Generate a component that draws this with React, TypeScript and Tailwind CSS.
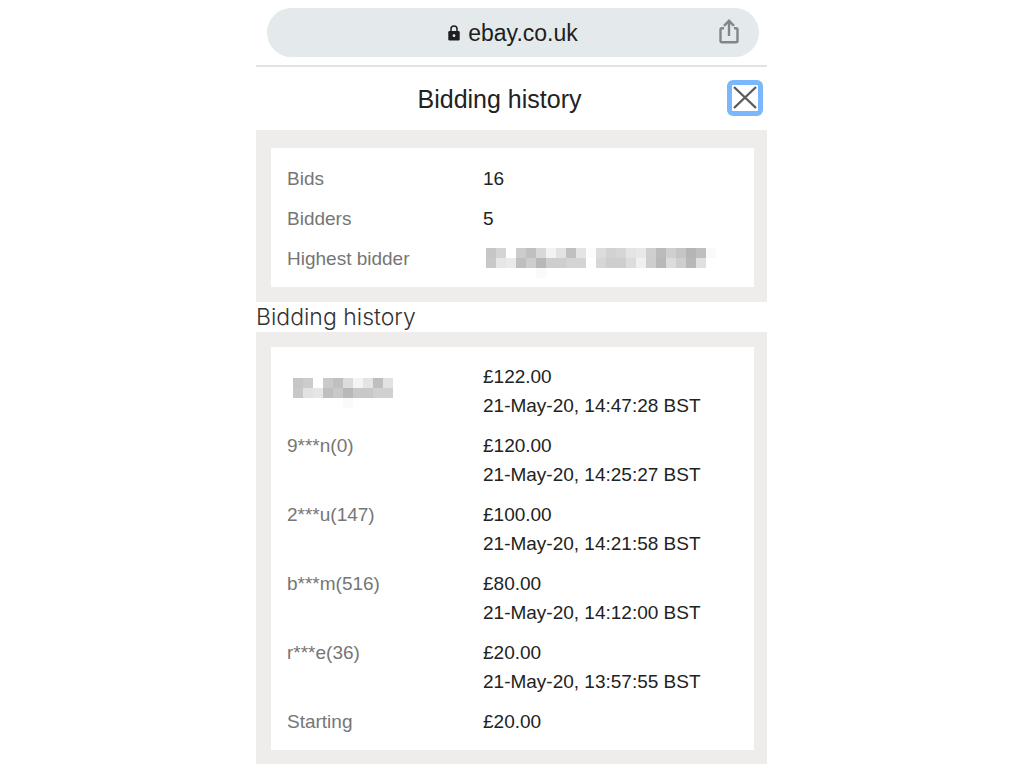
import React from "react";

type Entry = {
  bidder: string | null;
  amount: string;
  time?: string;
};

const entries: Entry[] = [
  { bidder: null, amount: "£122.00", time: "21-May-20, 14:47:28 BST" },
  { bidder: "9***n(0)", amount: "£120.00", time: "21-May-20, 14:25:27 BST" },
  { bidder: "2***u(147)", amount: "£100.00", time: "21-May-20, 14:21:58 BST" },
  { bidder: "b***m(516)", amount: "£80.00", time: "21-May-20, 14:12:00 BST" },
  { bidder: "r***e(36)", amount: "£20.00", time: "21-May-20, 13:57:55 BST" },
  { bidder: "Starting", amount: "£20.00" },
];

// Grey levels of the redaction mosaic, one two-digit hex value per 10px block.
const highestBidderBlocks = [
  "c6 d4 ff cc c0 d8 f2 e2 c0 e4 fc dc d2 d6 e4 e8 cf bb cf c5 b5 bf fa",
  "c8 e6 ea bf cd b8 cd ce d4 d4 ff d6 ce ce dc f0 ce b8 dc ce b8 e0 ff",
  "ff ff ff ff ff fa ff ff ff ff ff ff ff ff ff ff ff ff ff ff ff ff ff",
];

const topBidderBlocks = [
  "c6 cc ff ca c0 dc f4 e4 bf e2",
  "c8 e2 e6 bf c8 b8 c8 c8 d0 d0",
  "ff ff ff ff ff fa ff ff ff ff",
];

function Mosaic({ rows, label }: { rows: string[]; label: string }) {
  const cells = rows.map((row) => row.split(" "));
  const width = cells[0].length * 10;
  const height = cells.length * 10;
  return (
    <svg
      width={width}
      height={height}
      viewBox={`0 0 ${width} ${height}`}
      role="img"
      aria-label={label}
      shapeRendering="crispEdges"
      className="block"
    >
      {cells.map((row, y) =>
        row.map((level, x) => (
          <rect
            key={`${x}-${y}`}
            x={x * 10}
            y={y * 10}
            width={10}
            height={10}
            fill={`#${level}${level}${level}`}
          />
        )),
      )}
    </svg>
  );
}

function AddressBar() {
  return (
    <div className="border-b-2 border-[#e2e2e4] pt-2 pr-2 pb-2 pl-[11px]">
      <div className="grid h-[49px] grid-cols-[1fr_auto_1fr] items-center rounded-full bg-[#e4e9ec] px-5 text-[#1c1e20]">
        <span />
        <a
          href="https://ebay.co.uk"
          className="flex items-center gap-2 text-[23px] leading-7"
        >
          <svg width="12" height="16" viewBox="0 0 12 16" aria-hidden="true">
            <path d="M3 6.5V4a3 3 0 0 1 6 0v2.500" fill="none" stroke="currentColor" strokeWidth="1.500" />
            <rect x="0.300" y="6" width="11.400" height="9.500" rx="1.300" fill="currentColor" />
            <circle cx="6" cy="10.700" r="1.400" fill="#e4e9ec" />
          </svg>
          ebay.co.uk
        </a>
        <button type="button" aria-label="Share" className="justify-self-end pb-[2px] text-[#80868b]">
          <svg
            width="20"
            height="25"
            viewBox="0 0 20 25"
            fill="none"
            stroke="currentColor"
            strokeWidth="2.400"
            className="block"
          >
            <path d="M5 9.200H3A1.500 1.500 0 0 0 1.500 10.700V21.800a1.500 1.500 0 0 0 1.500 1.500h14a1.500 1.500 0 0 0 1.500-1.500V10.700a1.500 1.500 0 0 0-1.500-1.500H15" />
            <path d="M10 17V2.200M5 6.800l5-5 5 5" />
          </svg>
        </button>
      </div>
    </div>
  );
}

const labelCell = "w-[196px] p-0 text-left align-top font-normal text-[#767676]";

export default function App() {
  return (
    <main className="mx-auto w-full max-w-lg bg-white pr-px font-['Liberation_Sans',Arial,sans-serif] text-[19px] leading-[29px] text-[#222222]">
      <AddressBar />

      <header className="flex h-[63px] items-center pr-1">
        <h1 className="flex-1 pl-4 text-center text-[25px] leading-8">Bidding history</h1>
        <button
          type="button"
          aria-label="Close"
          className="mb-[2px] flex size-9 items-center justify-center rounded-md border-[5px] border-[#7ab7fb] bg-white"
        >
          <svg width="24" height="24" viewBox="0 0 24 24" fill="none" stroke="#5c5c5c" strokeWidth="2.400">
            <path d="M1 1l22 21M23 1L1 22" />
          </svg>
        </button>
      </header>

      <section className="bg-[#eeedeb] pt-[18px] pr-[13px] pb-[15px] pl-[15px]">
        <div className="bg-white px-4 pt-4 pb-[14px]">
          <table className="w-full border-collapse">
            <tbody>
              <tr>
                <th scope="row" className={labelCell}>Bids</th>
                <td className="p-0 pb-[11px]">16</td>
              </tr>
              <tr>
                <th scope="row" className={labelCell}>Bidders</th>
                <td className="p-0 pb-[11px]">5</td>
              </tr>
              <tr>
                <th scope="row" className={labelCell}>Highest bidder</th>
                <td className="p-0 align-top">
                  <div className="h-[29px] pt-1 pl-[3px]">
                    <Mosaic rows={highestBidderBlocks} label="Hidden bidder name" />
                  </div>
                </td>
              </tr>
            </tbody>
          </table>
        </div>
      </section>

      <h2 className="font-[Inter,sans-serif] text-[23px] leading-[30px] font-light text-[#333333]">
        Bidding history
      </h2>

      <section className="bg-[#eeedeb] pt-[15px] pr-[13px] pb-[14px] pl-[15px]">
        <div className="bg-white px-4 pt-[15px] pb-[14px]">
          <table className="w-full border-collapse">
            <tbody>
              {entries.map((entry) => (
                <tr key={entry.bidder ?? "top"} className="group">
                  <th scope="row" className={labelCell}>
                    {entry.bidder ?? (
                      <div className="pt-4 pl-[6px]">
                        <Mosaic rows={topBidderBlocks} label="Hidden bidder name" />
                      </div>
                    )}
                  </th>
                  <td className="p-0 pb-[11px] align-top group-last:pb-0">
                    <div>{entry.amount}</div>
                    {entry.time && <div>{entry.time}</div>}
                  </td>
                </tr>
              ))}
            </tbody>
          </table>
        </div>
      </section>
    </main>
  );
}
